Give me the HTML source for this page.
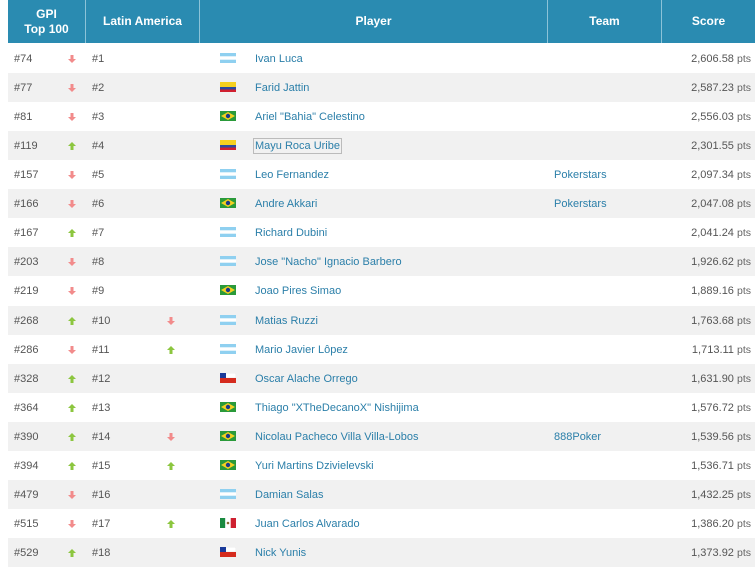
<!DOCTYPE html><html><head><meta charset="utf-8"><style>
body{margin:0;width:755px;height:563px;overflow:hidden;background:#fff;font-family:"Liberation Sans",sans-serif;font-size:11px;color:#555}
.hd{position:absolute;left:8px;top:0;width:747px;height:43px;background:#2a8bb1;color:#fff;font-weight:bold;font-size:12px}
.hd div{position:absolute;top:0;height:43px;display:flex;align-items:center;justify-content:center;text-align:center;line-height:15px;border-right:1px solid #8cc3d8}
.r{position:absolute;left:8px;width:747px;height:29px}
.r span{position:absolute;top:9px;line-height:12px}
.g{background:#f1f1f1}
a{color:#2b7fa9;text-decoration:none}
.up,.dn{position:absolute;top:11px;width:8px;height:8px}
.f{position:absolute;top:9px;left:212px;width:16px;height:10px}
</style></head><body>
<div class="hd">
<div style="left:0;width:77px">GPI<br>Top 100</div>
<div style="left:78px;width:113px">Latin America</div>
<div style="left:192px;width:347px">Player</div>
<div style="left:540px;width:113px">Team</div>
<div style="left:654px;width:93px;border:none">Score</div>
</div>
<div id="t"></div>
<script>
var d=[["#74","d","#1","","AR","Ivan Luca","","2,606.58"],["#77","d","#2","","CO","Farid Jattin","","2,587.23"],["#81","d","#3","","BR","Ariel \"Bahia\" Celestino","","2,556.03"],["#119","u","#4","","CO","Mayu Roca Uribe","","2,301.55"],["#157","d","#5","","AR","Leo Fernandez","Pokerstars","2,097.34"],["#166","d","#6","","BR","Andre Akkari","Pokerstars","2,047.08"],["#167","u","#7","","AR","Richard Dubini","","2,041.24"],["#203","d","#8","","AR","Jose \"Nacho\" Ignacio Barbero","","1,926.62"],["#219","d","#9","","BR","Joao Pires Simao","","1,889.16"],["#268","u","#10","d","AR","Matias Ruzzi","","1,763.68"],["#286","d","#11","u","AR","Mario Javier Lôpez","","1,713.11"],["#328","u","#12","","CL","Oscar Alache Orrego","","1,631.90"],["#364","u","#13","","BR","Thiago \"XTheDecanoX\" Nishijima","","1,576.72"],["#390","u","#14","d","BR","Nicolau Pacheco Villa Villa-Lobos","888Poker","1,539.56"],["#394","u","#15","u","BR","Yuri Martins Dzivielevski","","1,536.71"],["#479","d","#16","","AR","Damian Salas","","1,432.25"],["#515","d","#17","u","MX","Juan Carlos Alvarado","","1,386.20"],["#529","u","#18","","CL","Nick Yunis","","1,373.92"]];
function ar(t,x){if(!t)return"";return t=="u"?'<svg class="up" style="left:'+x+'px" viewBox="0 0 8 8"><path d="M4 0L8 4H5.5V8H2.5V4H0Z" fill="#8cc63f"/></svg>':'<svg class="dn" style="left:'+x+'px" viewBox="0 0 8 8"><path d="M4 8L8 4H5.5V0H2.5V4H0Z" fill="#f28b8b"/></svg>';}
function fl(c){var s='<svg class="f" viewBox="0 0 16 10">';
if(c=="AR")s+='<rect width="16" height="10" fill="#8fd0f0"/><rect y="3.3" width="16" height="3.4" fill="#fff"/>';
if(c=="CO")s+='<rect width="16" height="5" fill="#f5d020"/><rect y="5" width="16" height="2.5" fill="#2a4aa0"/><rect y="7.5" width="16" height="2.5" fill="#d02030"/>';
if(c=="BR")s+='<rect width="16" height="10" fill="#2a9a3a"/><path d="M8 1L15 5L8 9L1 5Z" fill="#f5d020"/><circle cx="8" cy="5" r="2.2" fill="#1a3a8a"/>';
if(c=="CL")s+='<rect width="16" height="5" fill="#fff" stroke="#ddd" stroke-width=".5"/><rect y="5" width="16" height="5" fill="#d52b1e"/><rect width="6" height="5" fill="#1a3a9a"/>';
if(c=="MX")s+='<rect width="5.3" height="10" fill="#1a8a40"/><rect x="5.3" width="5.4" height="10" fill="#fff"/><rect x="10.7" width="5.3" height="10" fill="#ce2030"/><circle cx="8" cy="5" r="1.3" fill="#8a6a30"/>';
return s+'</svg>';}
var h="";d.forEach(function(r,i){h+='<div class="r'+(i%2?' g':'')+'" style="top:'+(44+Math.round(i*29.06))+'px"><span style="left:6px">'+r[0]+'</span>'+ar(r[1],60)+'<span style="left:84px">'+r[2]+'</span>'+ar(r[3],159)+fl(r[4])+'<span style="left:247px"><a'+(i==3?' style="outline:1px solid #bbb;outline-offset:1px"':'')+'>'+r[5]+'</a></span><span style="left:546px"><a>'+r[6]+'</a></span><span style="right:4px">'+r[7]+' <span style="position:static;font-size:10.5px;color:#666">pts</span></span></div>';});
document.getElementById("t").innerHTML=h;
</script>
</body></html>
